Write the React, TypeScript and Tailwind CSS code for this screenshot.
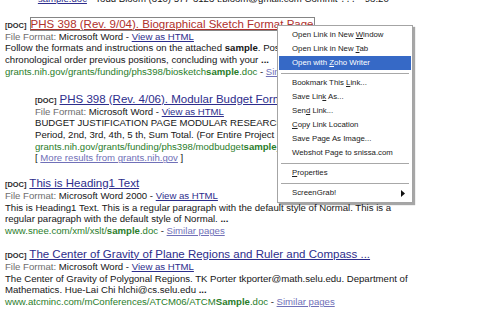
import React from 'react';

const link = 'text-[#2d2d8c] underline';
const similar = 'text-[#7070b8] underline';
const green = 'text-[#2a7d2a]';

function DocTag() {
  return <span className="text-[7.4px] font-bold text-[#2a2a2a]">[DOC]</span>;
}

function FileFormat({ kind }: { kind: string }) {
  return (
    <div className="whitespace-nowrap">
      <span className="text-[#6e6e6e]">File Format: </span>
      {kind} - <span className={link}>View as HTML</span>
    </div>
  );
}

function Title({ children }: { children: React.ReactNode }) {
  return (
    <div className="h-[14px] whitespace-nowrap text-[11.5px] leading-[14px]">
      <DocTag /> {children}
    </div>
  );
}

type Item = { label: React.ReactNode; active?: boolean; arrow?: boolean } | 'sep';

const menu: Item[] = [
  { label: <>Open Link in New <u>W</u>indow</> },
  { label: <>Open Link in New <u>T</u>ab</> },
  { label: <>Open with <u>Z</u>oho Writer</>, active: true },
  'sep',
  { label: <>Bookmark This <u>L</u>ink...</> },
  { label: <>Save Lin<u>k</u> As...</> },
  { label: <>Sen<u>d</u> Link...</> },
  { label: <><u>C</u>opy Link Location</> },
  { label: <>Save Page As Image...</> },
  { label: <>Webshot Page to snissa.com</> },
  'sep',
  { label: <><u>P</u>roperties</> },
  'sep',
  { label: <>ScreenGrab!</>, arrow: true },
];

function ContextMenu() {
  return (
    <div className="absolute left-[277px] top-[25px] w-[136px] border border-[#a4a4a4] bg-white px-[1px] py-[2px] font-['Liberation_Sans',Arial,sans-serif] text-[7.8px] text-[#222] shadow-[2px_2px_1px_rgba(0,0,0,0.35)]">
      {menu.map((it, i) =>
        it === 'sep' ? (
          <div key={i} className="flex h-[6px] items-center px-[2px]">
            <div className="h-px w-full bg-[#a8a8a8]" />
          </div>
        ) : (
          <div
            key={i}
            className={`flex h-[14px] items-center justify-between pl-[13px] pr-[6px] leading-[14px] ${
              it.active ? 'bg-[#3669c6] text-white' : ''
            }`}
          >
            <span>{it.label}</span>
            {it.arrow && (
              <svg width="4" height="7" viewBox="0 0 4 7">
                <path d="M0 0 L4 3.5 L0 7 Z" fill="#111" />
              </svg>
            )}
          </div>
        )
      )}
    </div>
  );
}

export default function App() {
  return (
    <div className="relative h-[319px] w-[500px] overflow-hidden bg-white pl-[5px] font-['Liberation_Sans',Arial,sans-serif] text-[9.6px] leading-[11.7px] text-[#161616]">
      {/* ligne coupée en haut */}
      <div className="-mt-[7px] h-[11.7px] whitespace-nowrap pl-[17px]">
        · <span className="ml-[10px] text-[#2d2d8c] underline">sample.doc</span> - Todd Bloom (310) 577-3123 t.bloom@gmail.com Commit ??? - 98.20
      </div>

      {/* résultat 1 */}
      <div className="mt-[12px]">
        <Title>
          <span className="inline-block border border-[#858585] leading-[12px] text-[#b0302c] underline">
            PHS 398 (Rev. 9/04). Biographical Sketch Format Page
          </span>
        </Title>
        <FileFormat kind="Microsoft Word" />
        <div className="whitespace-nowrap">
          Follow the formats and instructions on the attached <b>sample</b>. Positions and Honors. List in
        </div>
        <div className="whitespace-nowrap">
          chronological order previous positions, concluding with your <b>...</b>
        </div>
        <div className="whitespace-nowrap">
          <span className={green}>
            grants.nih.gov/grants/funding/phs398/biosketch<b>sample</b>.doc
          </span>{' '}
          - <span className={similar}>Similar pages</span>
        </div>
      </div>

      {/* résultat 2, indenté */}
      <div className="ml-[30px] mt-[14px]">
        <Title>
          <span className={link}>PHS 398 (Rev. 4/06). Modular Budget Format Page</span>
        </Title>
        <FileFormat kind="Microsoft Word" />
        <div className="whitespace-nowrap">
          BUDGET JUSTIFICATION PAGE MODULAR RESEARCH GRANT
        </div>
        <div className="whitespace-nowrap">
          Period, 2nd, 3rd, 4th, 5 th, Sum Total. (For Entire Project Period) <b>...</b>
        </div>
        <div className="whitespace-nowrap">
          <span className={green}>
            grants.nih.gov/grants/funding/phs398/modbudget<b>sample</b>_.doc
          </span>{' '}
          - <span className={similar}>Similar pages</span>
        </div>
        <div className="whitespace-nowrap">
          [ <span className={similar}>More results from grants.nih.gov</span> ]
        </div>
      </div>

      {/* résultat 3 */}
      <div className="mt-[12px]">
        <Title>
          <span className={link}>This is Heading1 Text</span>
        </Title>
        <FileFormat kind="Microsoft Word 2000" />
        <div className="whitespace-nowrap">
          This is Heading1 Text. This is a regular paragraph with the default style of Normal. This is a
        </div>
        <div className="whitespace-nowrap">
          regular paragraph with the default style of Normal. <b>...</b>
        </div>
        <div className="whitespace-nowrap">
          <span className={green}>
            www.snee.com/xml/xslt/<b>sample</b>.doc
          </span>{' '}
          - <span className={similar}>Similar pages</span>
        </div>
      </div>

      {/* résultat 4 */}
      <div className="mt-[10px]">
        <Title>
          <span className={link}>The Center of Gravity of Plane Regions and Ruler and Compass ...</span>
        </Title>
        <FileFormat kind="Microsoft Word" />
        <div className="whitespace-nowrap">
          The Center of Gravity of Polygonal Regions. TK Porter tkporter@math.selu.edu. Department of
        </div>
        <div className="whitespace-nowrap">
          Mathematics. Hue-Lai Chi hlchi@cs.selu.edu <b>...</b>
        </div>
        <div className="whitespace-nowrap">
          <span className={green}>
            www.atcminc.com/mConferences/ATCM06/ATCM<b>Sample</b>.doc
          </span>{' '}
          - <span className={similar}>Similar pages</span>
        </div>
      </div>

      <ContextMenu />
    </div>
  );
}
